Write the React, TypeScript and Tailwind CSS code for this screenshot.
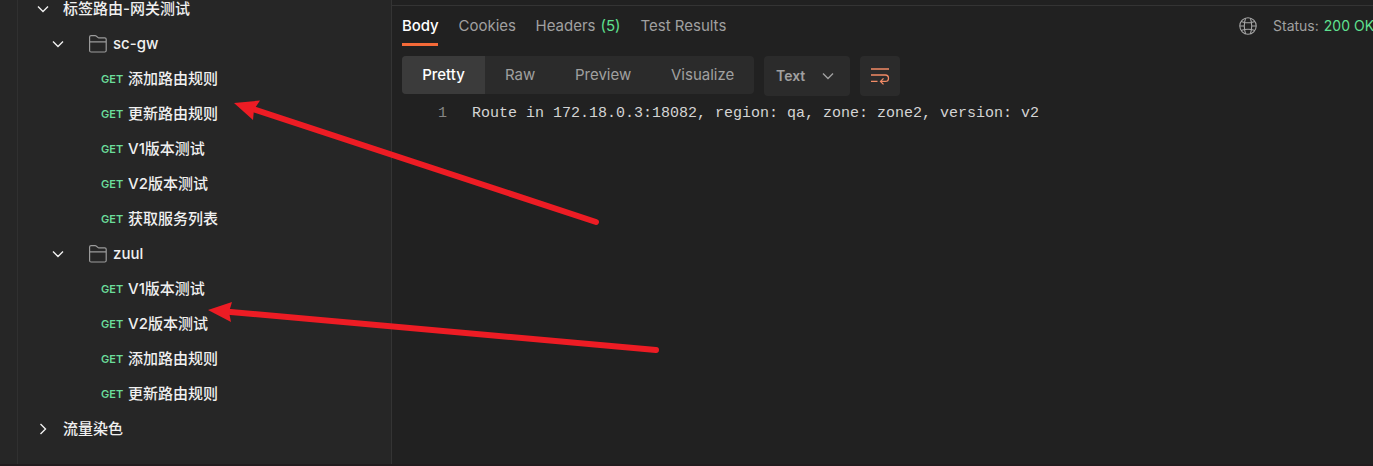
import React from "react";

const sans = "font-['Inter','Noto_Sans_CJK_SC',sans-serif]";

function Chevron({ open, className = "" }: { open: boolean; className?: string }) {
  return (
    <svg width="16" height="16" viewBox="0 0 16 16" fill="none" stroke="currentColor" strokeWidth="1.4" className={className}>
      <path d={open ? "M3 5.5L8 10.5L13 5.5" : "M5.5 3L10.5 8L5.5 13"} />
    </svg>
  );
}

function FolderIcon() {
  return (
    <svg width="20" height="20" viewBox="0 0 20 20" fill="none" stroke="#9b9b9b" strokeWidth="1.2">
      <path d="M1.6 16.5V3.1Q1.6 1.6 3.1 1.6H7.2Q7.8 1.6 8.2 2L9.8 3.4Q10.2 3.8 10.8 3.8H16.7Q18.2 3.8 18.2 5.3V16.5Q18.2 18 16.7 18H3.1Q1.6 18 1.6 16.5ZM1.6 7.9H18.2" />
    </svg>
  );
}

function Folder({ name }: { name: string }) {
  return (
    <div className="flex h-[35px] items-center pl-8">
      <Chevron open />
      <span className="ml-[22px]"><FolderIcon /></span>
      <span className="ml-[5px] pt-0.5">{name}</span>
    </div>
  );
}

function Request({ name }: { name: string }) {
  return (
    <div className="flex h-[35px] items-center pt-0.5 pl-[83px]">
      <span className="w-[27px] text-[11px] font-semibold text-[#6bdd9a]">GET</span>
      <span>{name}</span>
    </div>
  );
}

function Collection({ name, open }: { name: string; open: boolean }) {
  return (
    <div className="flex h-[35px] items-center pl-[17px]">
      <Chevron open={open} />
      <span className="ml-3 leading-4">{name}</span>
    </div>
  );
}

function Sidebar() {
  return (
    <aside className="flex w-[392px] shrink-0 border-r border-[#343434] bg-[#262626]">
      <div className="w-[18px] shrink-0 border-r border-[#303030]" />
      <div className="-mt-[9px] flex-1 whitespace-nowrap text-[15px] font-medium text-[#f0f0f0]">
        <Collection name="标签路由-网关测试" open />
        <Folder name="sc-gw" />
        <Request name="添加路由规则" />
        <Request name="更新路由规则" />
        <Request name="V1版本测试" />
        <Request name="V2版本测试" />
        <Request name="获取服务列表" />
        <Folder name="zuul" />
        <Request name="V1版本测试" />
        <Request name="V2版本测试" />
        <Request name="添加路由规则" />
        <Request name="更新路由规则" />
        <Collection name="流量染色" open={false} />
      </div>
    </aside>
  );
}

function GlobeIcon() {
  return (
    <svg width="18" height="18" viewBox="0 0 18 18" fill="none" stroke="#a6a6a6" strokeWidth="1.1" className="shrink-0">
      <circle cx="9" cy="9" r="8.2" />
      <path d="M6.6 1.2Q4 9 6.6 16.8M11.4 1.2Q14 9 11.4 16.8M2 4.6Q9 7 16 4.6M2 13.4Q9 11 16 13.4M.8 9H5.3M12.7 9H17.2" />
    </svg>
  );
}

function WrapIcon() {
  return (
    <svg width="20" height="18" viewBox="0 0 20 18" fill="none" stroke="#f28b66" strokeWidth="1.3">
      <path d="M1 2H19M1 8H15.3Q18.5 8 18.5 11.2Q18.5 14.4 15.3 14.4H10.8M1 14.4H7.5M13.5 11.4L10.5 14.4L13.5 17.4" />
    </svg>
  );
}

function Response() {
  return (
    <main className="flex min-w-0 flex-1 flex-col pt-[5px]">
      <div className="h-px shrink-0 bg-[#343434]" />
      <div className="flex h-10 pl-[10px] text-[15px] whitespace-nowrap text-[#a0a0a0]">
        <div className="mr-5 flex h-10 w-9 items-center border-b-[3px] border-[#f56a38] pt-[3px] font-medium tracking-[-0.1px] text-white">Body</div>
        <div className="flex h-10 w-[77px] items-center pl-[0.5px]">Cookies</div>
        <div className="flex h-10 w-[105px] items-center gap-[5px] pl-[0.5px]">
          Headers <span className="text-[#5fe08f]">(5)</span>
        </div>
        <div className="flex h-10 items-center pl-[0.5px]">Test Results</div>
        <div className="ml-auto flex h-10 w-[134px] shrink-0 items-center text-sm">
          <GlobeIcon />
          <span className="ml-4 shrink-0">Status:</span>
          <span className="ml-[5px] shrink-0 text-[#5fe08f]">200 OK</span>
        </div>
      </div>
      <div className="mt-[10px] flex items-start pl-[10px] text-[15px] text-[#a0a0a0]">
        <div className="flex h-[38px] w-[352px] items-center overflow-hidden rounded bg-[#2b2b2b]">
          <span className="flex h-full w-[83px] items-center justify-center bg-[#3b3b3b] font-medium text-white">Pretty</span>
          <span className="w-[70px] pl-5">Raw</span>
          <span className="w-24 pl-5">Preview</span>
          <span className="pl-5">Visualize</span>
        </div>
        <div className="ml-[10px] flex h-10 w-[86px] items-center justify-between rounded bg-[#2b2b2b] pr-[14px] pl-3 text-sm font-semibold">
          Text <Chevron open />
        </div>
        <div className="ml-[10px] flex h-10 w-10 items-center justify-center rounded bg-[#2b2b2b]">
          <WrapIcon />
        </div>
      </div>
      <div className="flex h-9 items-center font-['Liberation_Mono',monospace] text-[15px] whitespace-pre text-[#d4d4d4]">
        <span className="w-[80px] pl-[46px] text-[#858585]">1</span>
        <span>Route in 172.18.0.3:18082, region: qa, zone: zone2, version: v2</span>
      </div>
    </main>
  );
}

function Annotations() {
  return (
    <svg className="pointer-events-none absolute inset-0" width="1373" height="466" viewBox="0 0 1373 466">
      <g stroke="#ed1c24" strokeWidth="6" strokeLinecap="round">
        <path d="M250 108L596 222" />
        <path d="M225 311.5L656 350" />
      </g>
      <g fill="#ed1c24">
        <path d="M234 103L260 100.5L254 109.5L253 120Z" />
        <path d="M208 310L232 302L229 312L231 322Z" />
      </g>
    </svg>
  );
}

export default function App() {
  return (
    <div className={`relative flex h-[466px] w-[1373px] flex-col overflow-hidden bg-[#212121] ${sans}`}>
      <div className="flex min-h-0 flex-1">
        <Sidebar />
        <Response />
      </div>
      <div className="h-0.5 shrink-0 bg-[#211c1e]" />
      <Annotations />
    </div>
  );
}
